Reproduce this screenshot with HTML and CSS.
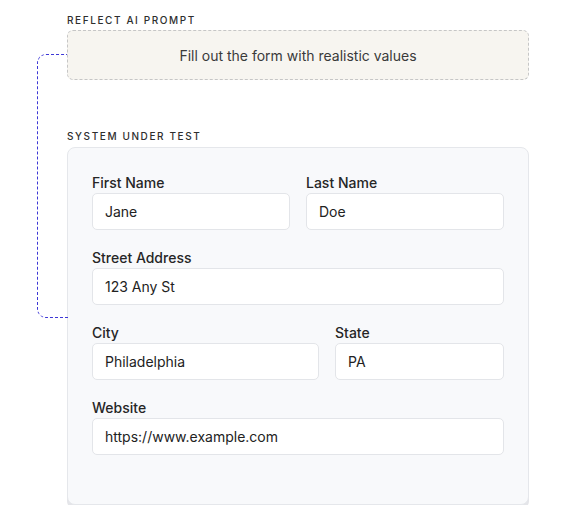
FILE: index.html
```html
<!DOCTYPE html>
<html>
<head>
<meta charset="utf-8">
<link rel="stylesheet" href="styles.css">
</head>
<body>
<div class="page">
  <div class="connector"></div>
  <div class="section-label">REFLECT AI PROMPT</div>
  <div class="prompt">Fill out the form with realistic values</div>
  <div class="section-label sut-label">SYSTEM UNDER TEST</div>
  <div class="card">
    <div class="row two">
      <div class="field">
        <div class="label">First Name</div>
        <div class="input">Jane</div>
      </div>
      <div class="field">
        <div class="label">Last Name</div>
        <div class="input">Doe</div>
      </div>
    </div>
    <div class="field">
      <div class="label">Street Address</div>
      <div class="input">123 Any St</div>
    </div>
    <div class="row city">
      <div class="field">
        <div class="label">City</div>
        <div class="input">Philadelphia</div>
      </div>
      <div class="field">
        <div class="label">State</div>
        <div class="input">PA</div>
      </div>
    </div>
    <div class="field">
      <div class="label">Website</div>
      <div class="input">https://www.example.com</div>
    </div>
  </div>
</div>
</body>
</html>
```
FILE: styles.css
```css
* { box-sizing: border-box; }
body {
  margin: 0;
  background: #ffffff;
  font-family: Inter, "Noto Sans", "Liberation Sans", sans-serif;
  color: #222;
}
.page {
  position: relative;
  padding: 13px 0 0 67px;
  width: 529px;
}
.connector {
  position: absolute;
  left: 37px;
  top: 54px;
  width: 31px;
  height: 264px;
  border: 1px dashed #3d37d6;
  border-right: none;
  border-radius: 9px 0 0 9px;
}
.section-label {
  font-size: 10px;
  line-height: 14px;
  letter-spacing: 1.6px;
  font-weight: 500;
  color: #2e2e2e;
  margin-bottom: 3px;
}
.sut-label {
  margin-top: 49px;
  margin-bottom: 4px;
}
.prompt {
  position: relative;
  height: 50px;
  border: 1px dashed #c6c6c6;
  border-radius: 6px;
  background: #f7f5f0;
  display: flex;
  align-items: center;
  justify-content: center;
  font-size: 14px;
  color: #3a3a3a;
}
.card {
  background: #f8f9fb;
  border: 1px solid #e5e7eb;
  border-radius: 8px;
  padding: 23px 24px 49px;
  display: flex;
  flex-direction: column;
  gap: 16px;
  box-shadow: 0 4px 0 #e4e5e9;
}
.row {
  display: grid;
  gap: 16px;
}
.row.two { grid-template-columns: 1fr 1fr; }
.row.city { grid-template-columns: 227fr 169fr; }
.field {
  display: flex;
  flex-direction: column;
}
.label {
  font-size: 14px;
  line-height: 18px;
  padding-top: 3px;
  font-weight: 500;
  color: #262626;
  margin-bottom: 1px;
}
.input {
  height: 37px;
  background: #fff;
  border: 1px solid #e3e5e9;
  border-radius: 5px;
  padding-left: 12px;
  display: flex;
  align-items: center;
  font-size: 14px;
  color: #222;
}
```
